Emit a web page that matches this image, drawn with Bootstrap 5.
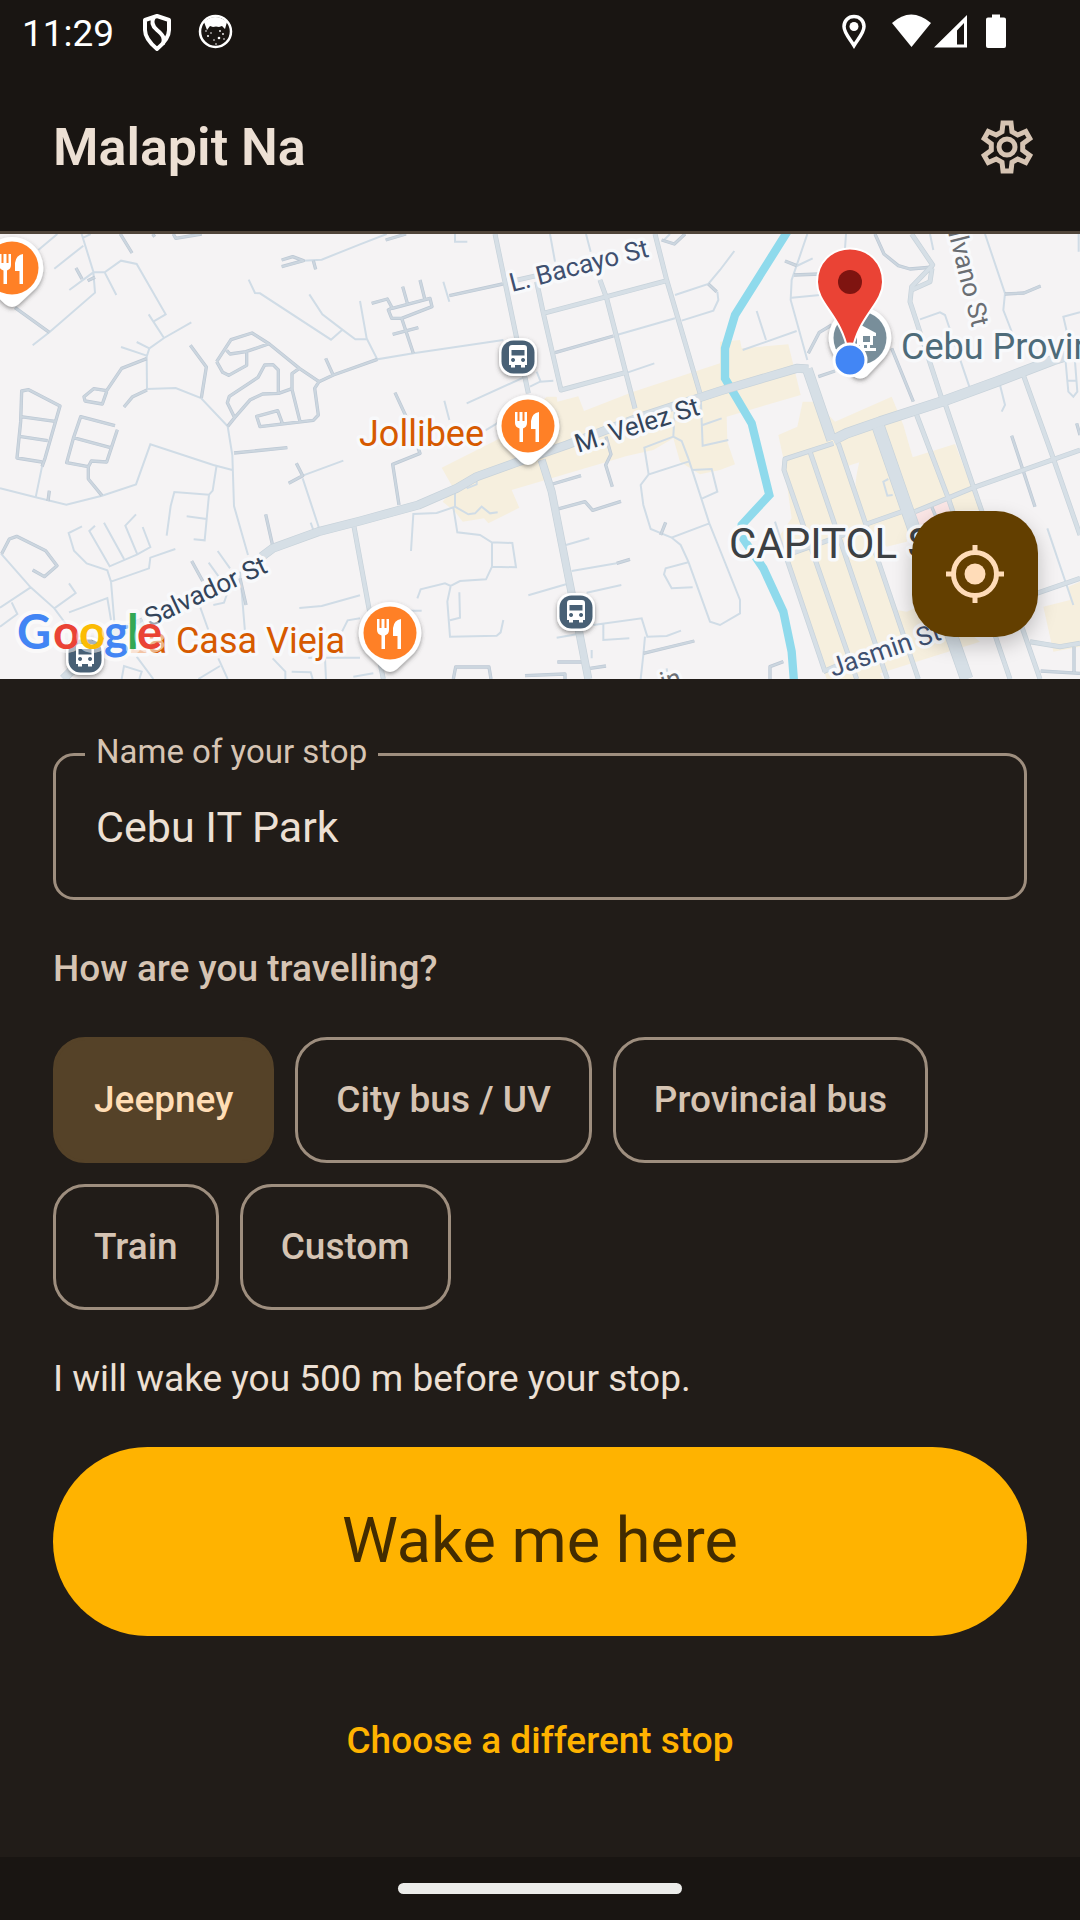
<!DOCTYPE html>
<html lang="en">
<head>
<meta charset="utf-8">
<meta name="viewport" content="width=device-width, initial-scale=1">
<title>Malapit Na</title>
<link href="https://cdn.jsdelivr.net/npm/bootstrap@5.3.0/dist/css/bootstrap.min.css" rel="stylesheet">
<style>
  :root { --ink:#ede0d4; --muted:#d6c4b3; --line:#9e8e7e; --bar:#191512; --surface:#211c18; --amber:#ffb300; }
  body { background:var(--surface); color:var(--ink); font-family:Roboto,"Noto Sans",sans-serif; font-size:37px; line-height:53px; }
  .sys-bar { background:var(--bar); color:#fff; height:63px; padding:0 73px 0 22px; font-size:37px; }
  .sys-icons { gap:20px; }
  .top-bar { background:var(--bar); height:171px; border-bottom:3px solid #50453a; padding:0 10px 0 53px; }
  .app-title { font-size:52px; line-height:63px; font-weight:600; color:var(--ink); }
  .gear-btn { width:126px; height:126px; color:var(--muted); }
  .map-pane { height:445px; background:#f5f3f4; }
  .map-pane > svg { width:100%; height:100%; }
  .fab { right:42px; bottom:42px; width:126px; height:126px; border-radius:42px; background:#633f00; color:#ffdcb8; box-shadow:0 8px 20px rgba(0,0,0,.22); }
  .stop-form { padding:74px 53px 53px; gap:42px; }
  .stop-input, .stop-input:focus { height:147px; border:3px solid var(--line); border-radius:21px; padding:0 40px; background:transparent; color:var(--ink); font-size:43px; box-shadow:none; }
  .stop-label { top:-25px; left:32px; padding:0 11px; background:var(--surface); color:var(--muted); font-size:33px; line-height:48px; }
  .ask { font-size:37px; line-height:53px; font-weight:500; color:var(--muted); }
  .chips { gap:21px; }
  .chip { height:126px; border:3px solid var(--line); border-radius:32px; padding:0 38px; color:var(--muted); font-size:37px; font-weight:500; }
  .btn-check:checked + .chip { background:#554228; border-color:#554228; color:#ffddb5; }
  .wake { height:189px; border-radius:95px; background:var(--amber); color:#432c00; font-size:63px; }
  .other { height:126px; color:var(--amber); font-size:37px; font-weight:500; }
  .nav-strip { background:var(--bar); height:63px; }
  .handle { width:284px; height:11px; background:#ececea; }

  /* Streets: each set is drawn once as an edge and once as a narrower core */
  .road-a path { fill:none; stroke:#d0dce6; stroke-width:6; }
  .lanes path { fill:none; stroke-linejoin:round; }
  .lane-edge { stroke:#bdc8d4; stroke-width:10px; }
  .lane-core { stroke:#ccd6df; stroke-width:6px; }
  .majors { fill:none; stroke-linejoin:round; }
  .major-edge { stroke:#c7d2da; --trim:0px; }
  .major-core { stroke:#d6dfe6; --trim:4px; }
  .w14 { stroke-width:calc(15px - var(--trim)); }
  .w22 { stroke-width:calc(24px - var(--trim)); }
  .w26 { stroke-width:calc(27px - var(--trim)); }
  .w32 { stroke-width:calc(32px - var(--trim)); }
  .w40 { stroke-width:calc(40px - var(--trim)); }
  .tag { paint-order:stroke; stroke:#f8f9fb; stroke-width:7px; stroke-linejoin:round; font-family:Roboto,sans-serif; }
</style>
</head>
<body class="d-flex flex-column min-vh-100">

<div class="sys-bar d-flex align-items-center justify-content-between">
  <div class="sys-icons d-flex align-items-center">
    <span class="pt-1">11:29</span>
    <svg class="ms-1" width="40" height="40" viewBox="0 0 40 40" fill="none" stroke="#fff" stroke-width="4" stroke-linejoin="round" aria-label="Shield"><path d="M19 4 31 8v10c0 8-6 14-12 19C13 32 7 26 7 18V8zM16 5c-3 5-2 9 3 13 6 5 8 8 6 14"/></svg>
    <svg width="36" height="36" viewBox="0 0 36 36" aria-label="Cat"><circle cx="17.500" cy="17.500" r="15.500" fill="none" stroke="#fff" stroke-width="2.500"/><path d="M6 8Q17-2 29 8l-2 7-3-3-3 1q-3-1-6 0l-3-1-3 4z" fill="#fff"/><g fill="#fff"><circle cx="10" cy="22" r="1"/><circle cx="21" cy="24" r="1.300"/><circle cx="16" cy="26" r=".8"/><circle cx="25" cy="20" r=".9"/><circle cx="22" cy="17" r=".9"/><circle cx="13" cy="19" r=".8"/><circle cx="18" cy="30" r=".8"/><circle cx="26" cy="25" r=".8"/><circle cx="8" cy="17" r=".8"/></g></svg>
  </div>
  <div class="d-flex align-items-center">
    <svg width="26" height="36" viewBox="0 0 26 36" aria-label="Location"><path d="M13 2.500C7 2.500 3 7 3 12.500c0 6.500 6.500 13 10 19 3.500-6 10-12.500 10-19C23 7 19 2.500 13 2.500z" fill="none" stroke="#fff" stroke-width="3.500"/><circle cx="13" cy="12.500" r="4.500" fill="#fff"/></svg>
    <svg class="ms-4" width="116" height="36" viewBox="0 0 116 36" fill="#fff" aria-label="Wi-Fi, signal and battery"><path d="M1 9Q20-8 40 9L20.500 33z"/><path fill-rule="evenodd" d="M43 33.500 76 1V33.500zM66 30.500h7V9l-7 7.500z"/><path d="M101 .5h8v3h4q2 0 2 2V32q0 2-2 2H97q-2 0-2-2V5.500q0-2 2-2h4z"/></svg>
  </div>
</div>

<header class="top-bar d-flex align-items-center justify-content-between">
  <h1 class="app-title m-0">Malapit Na</h1>
  <button class="gear-btn btn border-0 p-0 d-flex align-items-center justify-content-center" type="button" aria-label="Settings">
    <svg width="54" height="54" viewBox="-27 -27 54 54" fill="none" stroke="currentColor" stroke-width="5"><path d="M-4-24-5-15.300-10.700-12-18.800-15.500-22.800-8.500-15.700-3.300V3.300L-22.800 8.500-18.800 15.500-10.700 12-5 15.300-4 24H4L5 15.300 10.700 12 18.800 15.500 22.800 8.500 15.700 3.300V-3.300L22.800-8.500 18.800-15.500 10.700-12 5-15.300 4-24z"/><circle r="8"/></svg>
  </button>
</header>

<section class="map-pane position-relative overflow-hidden" aria-label="Map">
<svg viewBox="0 0 1080 445" preserveAspectRatio="xMidYMid slice" class="d-block">
  <defs>
    <filter id="sh" x="-30%" y="-30%" width="160%" height="160%"><feDropShadow dx="0" dy="2" stdDeviation="2" flood-color="#444" flood-opacity=".55"/></filter>
    <g id="food"><path d="M0-31A31 31 0 0 1 24 20L7 36Q0 42-7 36L-24 20A31 31 0 0 1 0-31z" fill="#fff" filter="url(#sh)"/><circle r="26.500" fill="#ff8026"/><path fill="#fff" d="M-13-14h2.500v9h2v-9h3v9h2v-9H-1V-3q0 4-4 5.500V16h-3.500V2.500Q-13 1-13-3zM11-14V16H7.500V3H3V-5q1-8 8-9z"/></g>
    <g id="bus"><rect x="-19" y="-19" width="38" height="38" rx="14" fill="#fff" filter="url(#sh)"/><rect x="-16.500" y="-16.500" width="33" height="33" rx="12" fill="#486075"/><path fill="#fff" fill-rule="evenodd" d="M-6-12H6q3 0 3 3V8H7v2.500H3V8H-3v2.500H-7V8H-9V-9q0-3 3-3zM-6.500-7V-1.500H6.500V-7zM-5 1a2 2 0 1 0 .1 0zM5 1a2 2 0 1 0 .1 0z"/></g>
    <g id="majors" class="majors">
      <path class="w14" d="M1062 905 1105 1140 1150 1362M1485 27 1550 340 1585 505M1610 170 1630 265 1683 495 1875 443M1965 27 2000 165 2100 505M1800 165 1820 220 1905 550M1630 265 1820 215 2000 167M1530 170 1610 152"/>
      <path class="w14" d="M2570 1362 2352 735 2355 702 2500 655M2430 680 2662 1362M2515 655 2755 1362M2360 1000 2475 1340M2750 570 2845 820 3030 1362M2835 535 2920 785 3120 1362M3070 450 3160 700 3240 930M2745 860 2920 788 3240 675M2600 897 2720 855M2375 985 2600 905M3110 1105 3240 1060M2735 27 2798 120 2735 185 2730 230 2825 520M3090 1250 3180 1265 3240 1255M2470 1340 2510 1322M2796 130 2790 170 2735 195"/>
      <path class="w26" d="M785 995 818 970 955 920 1080 888 1255 840 1370 790 1430 755 1550 712 1700 660 1910 580 2160 498 2390 430 2425 432M190 1362 240 1312 350 1225 430 1190"/>
      <path class="w22" d="M1625 705 1655 800 1712 1090 1765 1362"/>
      <path class="w32" d="M2422 432 2495 645M2500 645 2540 625 2640 590 2840 525 2990 470 3160 405 3240 380"/>
      <path class="w40" d="M2635 605 2720 850 2900 1362"/>
    </g>
    <g id="lanes" class="lanes">
      <path d="M45 248 148 322M361 27 396 84M228 129 246 162M263 167 285 157M520 27 527 40 605 27M458 27 464 35M571 361 619 426 604 519M440 401 365 430 320 497 281 491 252 515 255 528 307 537 320 500M441 495 398 515 372 546M126 725 135 700 180 543 86 494 65 498 62 590 51 699 126 711M62 575 165 589M58 634 143 647M345 602 242 575 220 640 200 713 265 725 274 708 320 711 352 614M220 638 332 668M265 725V762L306 812M148 797 144 828M650 410 693 344 756 324 808 357 898 430 957 470 1000 450 1132 403M680 376 690 387 738 380 805 357M650 410 668 442 686 451 740 421V380M957 470 944 490 955 570 940 586 780 605 770 574 833 557 848 597M898 430 876 446V493L900 590M876 491 836 505 788 507 751 524 704 578 683 604M704 578 682 533 688 514 774 457 794 420 819 419 835 435V505M977 400 998 447M702 684 862 668M889 715 908 752 866 775M797 868 818 962M5 986 28 942 50 934 137 977 171 1022 133 1055 98 1035M575 1008 608 1068M720 1060 738 1140M845 105 878 95 910 107 845 125M940 107 947 133"/>
      <path transform="translate(1080)" d="M77 45 138 27M35 235 82 222 97 250 210 220 216 245 125 280H95L85 255 97 248M128 185 143 238M180 165 195 225M125 280 160 385M98 328 175 308M268 212 428 177M585 383 760 333M105 503 150 600 180 685 98 718 117 840M578 777 663 752M738 635 753 688 737 720 757 785M590 853 675 830 698 856 783 829M917 892 902 930M770 1015 810 1003M592 1311H668M690 1330 738 1323M280 1362 287 1326H387L393 1362M495 1352 615 1347V1362M850 1285 1003 1248M905 45 943 57 975 27M1045 177 1070 200"/>
      <path transform="translate(2160)" d="M195 108 230 122M222 150 300 147M465 27 492 87 535 122 570 132 640 126M265 385 298 322 335 300M295 455 345 438M515 370 580 530M855 207 912 204 962 183M875 632 945 845M150 1362V1325L190 1310M635 845 650 880M962 1338 1080 1345M1062 1265V1340M1070 595 1080 630"/>
    </g>
  </defs>
  <svg width="1080" height="445" viewBox="0 27 3240 1335">
    <g fill="#f6efde">
      <path d="M1325 728 1520 630 1640 515H1670L1672 530 1735 514 1752 558 1900 500 2160 415V350L2220 345 2225 370 2365 358 2402 510 2180 575 2182 650 2205 718 2160 735 2100 748 2040 710 2020 640 1960 675 1880 693 1535 795 1558 848 1465 895 1452 880 1388 890 1365 860 1328 830 1360 790z"/>
      <path d="M2335 630 2392 605 2408 530H2445L2505 590 2675 515 2710 600 2738 697 2865 657 2942 855 2750 860 2720 950 2660 965 2600 900 2690 1155 2720 1160 2790 1130 2940 1250 2640 1345 2650 1362H2480L2340 930 2375 880 2350 700z"/>
      <path d="M3130 1145 3210 1125 3205 1085 3240 1070V1265L3160 1280z"/>
    </g>
    <path fill="#f5f3f4" d="M2545 722 2578 712C2560 780 2560 840 2600 895z"/>
    <path fill="#fbe6e6" d="M2745 860 2840 826 2860 880 2760 915z"/>
    <g class="road-a">
      <path d="M115 75 172 27M163 131 250 62M245 27 280 140 285 203 148 322 98 361M250 38 272 27M208 195 280 142H314L363 107 410 117 497 268 461 289M314 142 349 210M446 268 492 339M574 292 492 339 448 370 440 395 441 492M410 351 448 370M363 366 440 392M441 492 527 489 603 519 683 604 697 690 702 843 744 990M0 790 107 817 199 839 306 812 408 778 451 658 640 720 697 735M107 817 126 725M650 720 638 797 627 809 523 801 512 843 500 932M627 809 620 882 614 946 581 943M560 874 620 882M246 904 206 924 222 977 260 1015 322 1036 333 1070 343 1190M285 902 268 918 329 1024 412 988 451 966 428 906M312 893 372 1002M408 868 376 902 412 988M333 1070 447 1030 451 998 526 972M3 986 92 1087 163 1150 200 1200M0 1148 92 1087M163 1150 227 1104 207 1075M207 1162 322 1119 333 1185M0 1205 52 1167 35 1132M653 978 690 1030M626 1013 660 1060M720 1040 735 1220M640 1140 672 1133 680 1110M600 1145 625 1215M898 1149 965 1143 1080 1111M1080 1180 1043 1186 1026 1220M746 164 765 204 780 205 993 344 1027 314M928 208 967 268 1027 314 1066 343H1100M908 107 965 104 1080 58 1160 27M908 752 1030 707M908 760 958 912M932 893 940 915M365 1362 372 1323 425 1340 418 1362M410 1295 460 1362M660 1323 595 1362M655 1300 683 1362M818 1300 856 1340V1362M875 1340 932 1342 938 1362M925 1298H1080M975 1300 978 1362"/>
      <path transform="translate(1080)" d="M285 27V50H322M0 228 20 340 52 403 160 385 430 345M570 27 585 110M678 27 692 80M250 170 268 230M320 535 490 458M253 527 268 585M370 620 420 590M510 485 540 470 580 467M530 440 542 470M795 445 883 415M770 330 945 280M965 287 1060 257 1075 225 1072 200M945 210 1045 177 1080 135 1123 78M910 47 930 27M320 790 350 778V768M285 800V845L325 868 345 865 365 845 390 865 413 862M153 978 160 867 230 864 280 847 292 922 360 930 395 952 457 954 468 1027 396 1025V952M396 1025 378 1063 300 1068 272 1083 255 1075 182 1093 172 1120M272 1083 262 1130 270 1235 410 1232 422 1222 430 1185M298 1102 300 1178 270 1186M618 960 688 940M635 1038 770 1015M505 1111 618 1078M680 1103 784 1080M145 1157H185M944 560 940 635 853 668 866 748 985 710M940 635 965 648 985 700 1048 895 1080 975 1140 1125V1165L1080 1200 1050 1190 985 1010 962 960 935 938 1048 895M866 748 842 780 850 840 872 912 935 938M995 735 1055 732 1072 800 1027 820M985 1012 917 1030 912 1048 935 1090 998 1087M1022 510 1028 662 1105 645M1028 600 1085 580M700 1200 845 1180 862 1235 920 1233 963 1217M730 1197V1245L808 1240M855 1235 850 1290 842 1362M590 1238 650 1228M695 1275V1300M920 1330 925 1362M-20 1355 40 1345"/>
      <path transform="translate(2160)" d="M262 27 215 165 212 225 262 405M110 258 138 345M68 375 230 318M215 218 300 210M230 123 278 100M378 27 375 70M600 283 660 262 675 270 748 485M795 27 855 205 850 255 885 345M835 460 855 540 845 560M630 27 640 75M780 230 790 280M1035 390 1045 500 1060 515 1072 500 1065 410M1040 467H1070M1080 262 1030 275 1045 340M982 910 1060 1140M518 810 502 812 490 770 505 762M165 890 200 1000M1076 27V80"/>
    </g>
    <use href="#lanes" class="lane-edge"/>
    <use href="#lanes" class="lane-core"/>
    <path d="M2362 20 2205 270 2175 370V460L2255 595 2308 810 2225 900 2222 930 2290 1030 2350 1160 2375 1280 2382 1370" fill="none" stroke="#8fdaec" stroke-width="25"/>
    <use href="#majors" class="major-edge"/>
    <use href="#majors" class="major-core"/>
  </svg>

  <g class="tag" font-size="26">
    <g fill="#3f5070">
      <text transform="translate(512 58) rotate(-14.500)">L. Bacayo St</text>
      <text transform="translate(833 443) rotate(-19)">Jasmin St</text>
    </g>
    <g fill="#33445a">
      <text transform="translate(578 219) rotate(-17.500)">M. Velez St</text>
      <text transform="translate(150 393) rotate(-25)">Salvador St</text>
    </g>
    <text transform="translate(972 94) rotate(76)" text-anchor="end" fill="#6a6e73">Silvano St</text>
    <text transform="translate(663 457) rotate(-16)" fill="#6a6e73">in</text>
  </g>
  <g class="tag" font-size="36">
    <text x="359" y="212" fill="#d65a00">Jollibee</text>
    <text x="901" y="125" fill="#4d6b79">Cebu Provincial Capitol</text>
    <text x="729" y="324" font-size="42" fill="#3c4043">CAPITOL SITE</text>
  </g>
  <use href="#food" x="12" y="34"/><use href="#food" x="528" y="192"/><use href="#food" x="390" y="399"/>
  <use href="#bus" x="518" y="123"/><use href="#bus" x="576" y="378"/><use href="#bus" x="85" y="422"/>
  <text class="tag" x="345" y="419" text-anchor="end" font-size="36" fill="#d65a00"><tspan fill="#f3c3a4">L</tspan>a Casa Vieja</text>
  <text y="415" font-family="Lato,sans-serif" font-size="47" font-weight="700" paint-order="stroke" stroke="#fff" stroke-opacity=".55" stroke-width="8" stroke-linejoin="round" aria-label="Google"><tspan x="17" fill="#4285f4">G</tspan><tspan x="53" fill="#ea4335">o</tspan><tspan x="79" fill="#fbbc05">o</tspan><tspan x="104" fill="#4285f4">g</tspan><tspan x="127" fill="#34a853">l</tspan><tspan x="137" fill="#ea4335">e</tspan></text>
  <g transform="translate(860 104)"><path d="M0-31A31 31 0 0 1 24 20L7 38Q0 43-7 38L-24 20A31 31 0 0 1 0-31z" fill="#fff" filter="url(#sh)"/><circle r="26.500" fill="#788e9a"/><path fill="#fff" fill-rule="evenodd" d="M1-13 16-5V-2H13V7H10V10H16V13H-4V10H0V7H-3V-2H-6V-6zM3-2V4H10V-2zM4 7V10H7V7z"/></g>
  <path d="M850 14.500C831 14.500 817 29 817 48 817 70 842 82 848 118H852C858 82 883 70 883 48 883 29 869 14.500 850 14.500z" fill="#ea4335" stroke="#fff" stroke-width="2"/><circle cx="850" cy="48" r="12" fill="#7f1410"/>
  <circle cx="850" cy="126" r="16" fill="#4286f5" stroke="#fff" stroke-width="3"/>
</svg>
<button class="fab btn border-0 p-0 position-absolute d-flex align-items-center justify-content-center" type="button" aria-label="My location">
  <svg width="58" height="58" viewBox="-29 -29 58 58" fill="none" stroke="currentColor" stroke-width="5"><circle r="21.500"/><circle r="10.500" fill="currentColor" stroke="none"/><path d="M0-29V-22M0 22V29M-29 0H-22M22 0H29"/></svg>
</button>
</section>

<form class="stop-form d-flex flex-column flex-grow-1">
  <div class="position-relative">
    <input class="stop-input form-control" id="stopName" type="text" value="Cebu IT Park">
    <label class="stop-label position-absolute" for="stopName">Name of your stop</label>
  </div>
  <h2 class="ask m-0" id="modeLabel">How are you travelling?</h2>
  <div class="chips d-flex flex-wrap" role="radiogroup" aria-labelledby="modeLabel">
    <input class="btn-check" type="radio" name="mode" id="m1" checked><label class="chip btn d-flex align-items-center" for="m1">Jeepney</label>
    <input class="btn-check" type="radio" name="mode" id="m2"><label class="chip btn d-flex align-items-center" for="m2">City bus / UV</label>
    <input class="btn-check" type="radio" name="mode" id="m3"><label class="chip btn d-flex align-items-center" for="m3">Provincial bus</label>
    <input class="btn-check" type="radio" name="mode" id="m4"><label class="chip btn d-flex align-items-center" for="m4">Train</label>
    <input class="btn-check" type="radio" name="mode" id="m5"><label class="chip btn d-flex align-items-center" for="m5">Custom</label>
  </div>
  <p class="m-0">I will wake you 500 m before your stop.</p>
  <button class="wake btn w-100 border-0" type="button">Wake me here</button>
  <button class="other btn border-0 p-0" type="button">Choose a different stop</button>
</form>

<footer class="nav-strip d-flex align-items-center justify-content-center"><div class="handle rounded-pill"></div></footer>

<script src="https://cdn.jsdelivr.net/npm/bootstrap@5.3.0/dist/js/bootstrap.bundle.min.js"></script>
</body>
</html>
